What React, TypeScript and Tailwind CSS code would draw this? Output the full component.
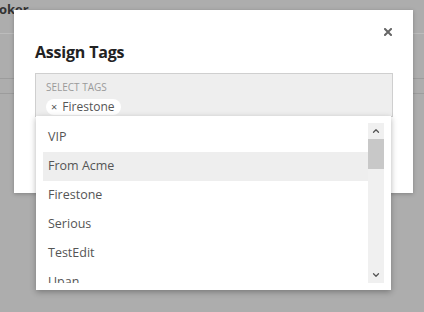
import { ChevronUp, ChevronDown } from 'lucide-react'

const tags = ['VIP', 'From Acme', 'Firestone', 'Serious', 'TestEdit', 'Upan']

export default function App() {
    const highlighted = 'From Acme'

    return (
        <div className="relative w-[424px] h-[312px] overflow-hidden bg-[#adadad] font-['Open_Sans',sans-serif]">
            {/* page behind the overlay */}
            <div className="h-[34px] border-b border-[#bcbcbc] pl-0 pt-[2px]">
                <span className="block -ml-[1px] text-[13px] font-bold leading-[14px] text-[#333]">oker</span>
            </div>
            <div className="h-[45px] border-b border-[#9c9c9c]" />
            <div className="h-[15px] border-b border-[#9c9c9c]" />

            {/* modal */}
            <div className="absolute left-[14px] top-[10px] w-[399px] h-[183px] bg-white shadow-[0_1px_4px_rgba(0,0,0,0.25)] px-[21px] pt-[32px]">
                <button className="absolute left-[370px] top-[18px] text-[#666]" aria-label="Close">
                    <svg width="8" height="8" viewBox="0 0 8 8">
                        <path d="M1 1L7 7M7 1L1 7" stroke="currentColor" strokeWidth="2" strokeLinecap="square" />
                    </svg>
                </button>
                <h2 className="text-[16px] font-bold leading-[20px] text-[#222] tracking-[-0.2px]">Assign Tags</h2>
                <div className="mt-[11px] h-[44px] w-[358px] bg-[#eeeeee] border border-[#cfcfcf] pl-[10px] pt-[7px]">
                    <div className="text-[10px] leading-[12px] uppercase text-[#9a9a9a]">Select Tags</div>
                    <div className="mt-[2px] inline-flex items-center h-[16px] rounded-[8px] bg-white pl-[5px] pr-[7px] text-[12px] text-[#555]">
                        <span className="text-[11px] mr-[5px] leading-none">×</span>
                        <span className="leading-none">Firestone</span>
                    </div>
                </div>
            </div>

            {/* dropdown */}
            <div className="absolute left-[36px] top-[116px] w-[355px] h-[174px] bg-white shadow-[0_2px_6px_rgba(0,0,0,0.3)] p-[7px] flex">
                <div className="flex-1 overflow-hidden">
                    {tags.map(t => (
                        <div
                            key={t}
                            className={`h-[29px] flex items-center pl-[5px] text-[12.5px] text-[#555] ${t === highlighted ? 'bg-[#eeeeee]' : ''}`}
                        >
                            {t}
                        </div>
                    ))}
                </div>
                <div className="w-[16px] bg-[#f0f0f0] flex flex-col items-center">
                    <div className="h-[16px] flex items-center justify-center text-[#555]">
                        <ChevronUp size={10} strokeWidth={3} />
                    </div>
                    <div className="w-full h-[30px] bg-[#c8c8c8]" />
                    <div className="flex-1" />
                    <div className="h-[16px] flex items-center justify-center text-[#555]">
                        <ChevronDown size={10} strokeWidth={3} />
                    </div>
                </div>
            </div>
        </div>
    )
}
